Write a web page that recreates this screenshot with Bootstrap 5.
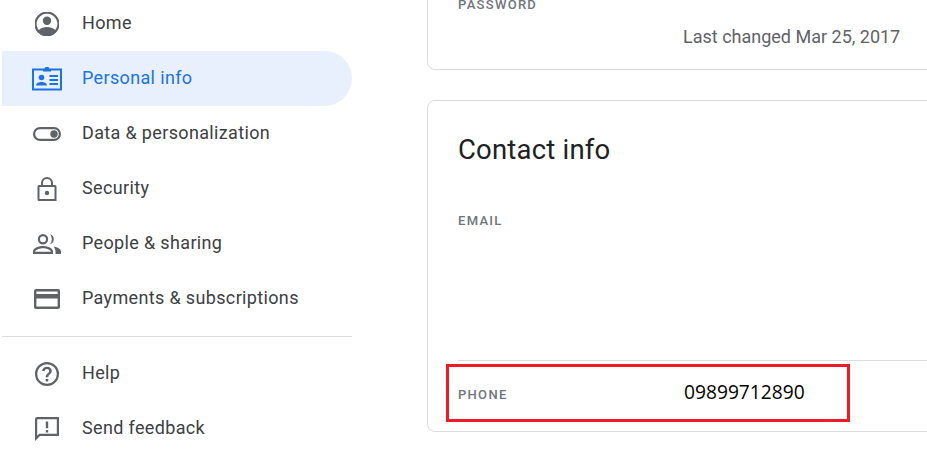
<!doctype html>
<html lang="en"><head><meta charset="utf-8">
<link href="https://cdn.jsdelivr.net/npm/bootstrap@5.3.0/dist/css/bootstrap.min.css" rel="stylesheet">
<style>
html,body{height:459px;overflow:hidden;background:#fff}
body{font-family:Roboto,"Noto Sans",sans-serif;color:#3c4043}
.shell{height:459px;overflow:hidden}
.side{width:350px;margin-left:2px;margin-top:-4px;flex:none}
.side-item{height:55px;padding-left:33px;font-size:18px;letter-spacing:.35px;color:#3c4043;text-decoration:none;gap:23px}
.side-item span{padding-bottom:2px}
.side-item svg{width:24px;height:24px;flex:none;fill:#5f6368}
.side-item svg.wide{width:30px;margin:0 -3px}
.side-item svg.wide28{width:28px;margin:0 -2px}
.side-item.on{background:#e8f0fe;color:#1a73e8;border-radius:0 27.5px 27.5px 0}
.side-item.on svg{fill:#1a73e8}
.side-rule{height:1px;background:#dadce0;margin:10px 0 9px}
.main{margin-left:75px;margin-top:-30px;flex:1 1 auto;min-width:0;overflow:hidden}
.pane{border:1px solid #dadce0;border-radius:8px;margin-right:-30px;padding-left:30px;background:#fff}
.pane-top{height:100px;margin-bottom:30px}
.lbl{font-size:13px;font-weight:500;letter-spacing:1.3px;color:#70757a;text-transform:uppercase;font-family:Roboto,sans-serif}
.pw{padding-top:27px;line-height:14px}
.changed{font-size:18px;color:#5f6368;padding-left:225px;margin-top:13px;line-height:24px}
.pane-main{height:332px}
.ttl{font-size:27.5px;color:#202124;line-height:36px;padding-top:31px;height:67px;letter-spacing:.2px}
.email-row{height:193px;padding-top:46px;line-height:14px;border-bottom:1px solid #dadce0}
.email-row .lbl{display:block}
.mark-box{position:relative;height:70px}
.phone{position:absolute;left:-12px;top:3px;width:404px;height:58px;border:3px solid #ed1c24}
.phone .lbl{position:absolute;top:21px;left:9px;line-height:14px}
.phone .val{position:absolute;left:235px;top:13px;font-family:"Open Sans","Noto Sans",sans-serif;font-size:19.2px;line-height:24px;color:#000}
</style></head><body>
<div class="shell d-flex">
<nav class="side d-flex flex-column">
<a class="side-item d-flex align-items-center" href="#"><svg viewBox="0 0 24 24"><path fill-rule="evenodd" d="M12-.5a12.500 12.500 0 1 0 0 25a12.500 12.500 0 0 0 0-25zm0 2.200a10.300 10.300 0 0 1 8.300 16.400C18.200 15.900 15 15 12 15s-6.300.9-8.300 3.100A10.300 10.300 0 0 1 12 1.700zm0 2.800a4.200 4.200 0 1 0 0 8.400a4.200 4.200 0 0 0 0-8.400z"/></svg><span>Home</span></a>
<a class="side-item on d-flex align-items-center" href="#"><svg class="wide" viewBox="0 0 30 24"><path fill-rule="evenodd" d="M11 1.500h1.500A2 2 0 0 1 14 0h2a2 2 0 0 1 1.500 1.500H19v3h-8v-1H2v18h26v-18h-9v-2h11v22H0v-22h11z"/><circle cx="9.500" cy="10.500" r="2.800"/><path d="M4 18.500c0-2.500 3-3.500 5.500-3.500s5.500 1 5.500 3.500zM17.500 8H26v2h-8.500zM17.500 12H26v2h-8.500zM17.500 16H26v2h-8.500z"/></svg><span>Personal info</span></a>
<a class="side-item d-flex align-items-center" href="#"><svg class="wide" viewBox="0 0 30 24"><path fill-rule="evenodd" d="M8 5h14a7 7 0 0 1 0 14H8A7 7 0 0 1 8 5zm0 2.200a4.800 4.800 0 0 0 0 9.600h14a4.800 4.800 0 0 0 0-9.600z"/><circle cx="22" cy="12" r="3.700"/></svg><span>Data &amp; personalization</span></a>
<a class="side-item d-flex align-items-center" href="#"><svg viewBox="0 0 24 24"><path fill-rule="evenodd" d="M12 0a6 6 0 0 1 6 6v2h2a1.500 1.500 0 0 1 1.500 1.500V24H4a1.500 1.500 0 0 1-1.500-1.500v-13A1.500 1.500 0 0 1 4 8h2V6a6 6 0 0 1 6-6zm0 2a4 4 0 0 0-4 4v2h8V6a4 4 0 0 0-4-4zM4.500 10v12h15V10zM12 13.800a2.200 2.200 0 1 1 0 4.400a2.200 2.200 0 0 1 0-4.400z"/></svg><span>Security</span></a>
<a class="side-item d-flex align-items-center" href="#"><svg class="wide28" viewBox="0 0 28 24"><path fill-rule="evenodd" d="M10 2a5.200 5.200 0 1 1 0 10.400A5.200 5.200 0 0 1 10 2zm0 2.200a3 3 0 1 0 0 6a3 3 0 0 0 0-6zM0 22v-2.500c0-3.800 6.500-5.500 10-5.500s10 1.700 10 5.500V22zm2.200-2.200h15.600v-.3c0-1.900-5-3.300-7.800-3.300s-7.800 1.400-7.800 3.300z"/><path d="M17 2.200a5.200 5.200 0 0 1 0 10c1.200-1.400 1.800-3.200 1.800-5S18.200 3.600 17 2.200zM20.500 14.400c3.500.6 7.500 2.100 7.500 5V22h-5.500v-2.500c0-2-1-3.800-2-5.100z"/></svg><span>People &amp; sharing</span></a>
<a class="side-item d-flex align-items-center" href="#"><svg class="wide28" viewBox="0 0 28 24"><path fill-rule="evenodd" d="M3 2h22a2 2 0 0 1 2 2v16a2 2 0 0 1-2 2H3a2 2 0 0 1-2-2V4a2 2 0 0 1 2-2zM3.400 4.400V7h21.200V4.400zM3.400 11.500v8.100h21.200v-8.100z"/></svg><span>Payments &amp; subscriptions</span></a>
<div class="side-rule"></div>
<a class="side-item d-flex align-items-center" href="#"><svg viewBox="0 0 24 24"><path fill-rule="evenodd" d="M12 0a12 12 0 1 0 0 24a12 12 0 0 0 0-24zm0 2.200a9.800 9.800 0 1 1 0 19.600a9.800 9.800 0 0 1 0-19.600z"/><path d="M10.700 17h2.600v2.500h-2.600zM12 4.800c2.800 0 4.800 1.800 4.800 4.200c0 3-3.500 3.300-3.500 6.300h-2.600c0-3.700 3.500-4 3.500-6.300c0-1.100-1-2-2.200-2s-2.200.9-2.200 2H7.200c0-2.400 2-4.200 4.800-4.200z"/></svg><span>Help</span></a>
<a class="side-item d-flex align-items-center" href="#"><svg viewBox="0 0 24 24"><path fill-rule="evenodd" d="M2 0h22v19H5l-5 5V2a2 2 0 0 1 2-2zm.2 2.200v16.500l1.900-1.900h17.700V2.200z"/><path d="M10.800 4.500h2.400v6.800h-2.400zM10.800 13h2.400v2.400h-2.400z"/></svg><span>Send feedback</span></a>
</nav>
<main class="main">
<section class="pane pane-top"><div class="pw lbl">Password</div><div class="changed">Last changed Mar 25, 2017</div></section>
<section class="pane pane-main">
<h2 class="ttl fw-normal m-0">Contact info</h2>
<div class="email-row"><span class="lbl">Email</span></div>
<div class="mark-box"><div class="phone"><span class="lbl">Phone</span><span class="val">09899712890</span></div></div>
</section>
</main>
</div>
</body></html>
